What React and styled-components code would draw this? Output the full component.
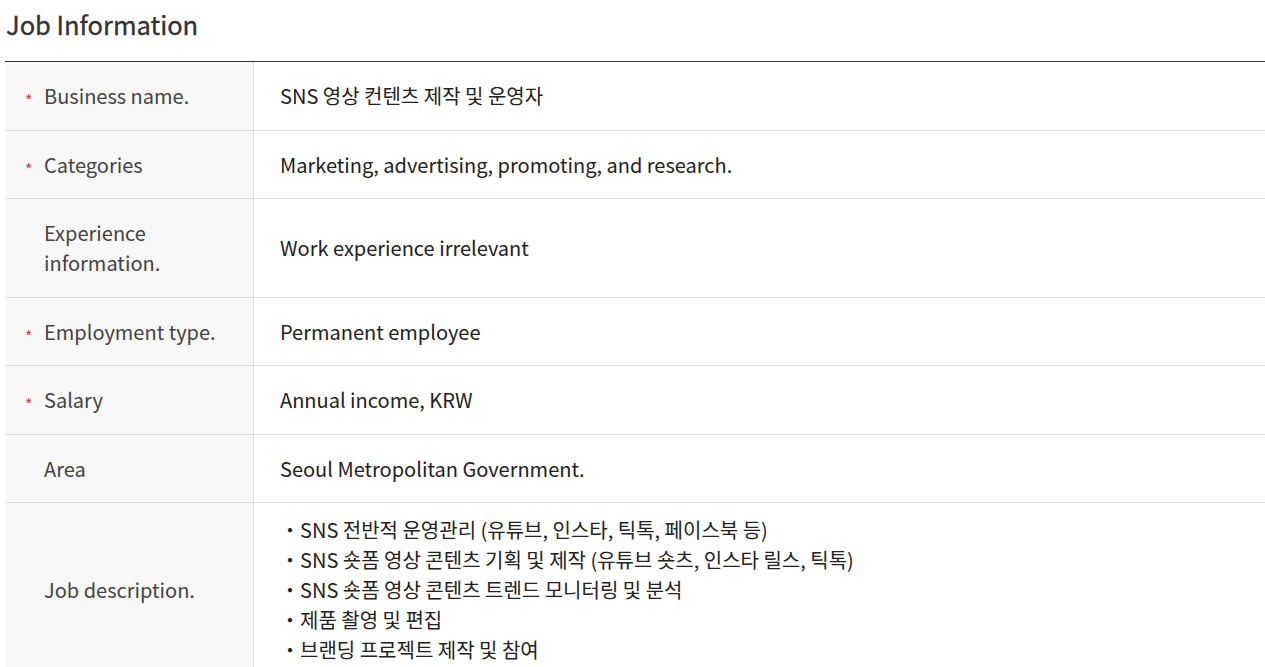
import React from "react";
import styled, { createGlobalStyle } from "styled-components";

const Global = createGlobalStyle`
  body {
    margin: 0;
    background: #fff;
    font-family: "Noto Sans CJK KR", "Noto Sans", sans-serif;
  }
`;

const Section = styled.section`
  padding: 0 0 0 5px;
`;

const Title = styled.h2`
  margin: 0;
  padding: 6px 0 0 1px;
  height: 61px;
  box-sizing: border-box;
  font-size: 25.5px;
  font-weight: 400;
  -webkit-text-stroke: 0.35px #333;
  color: #333;
  line-height: 36px;
`;

const Table = styled.div`
  border-top: 1px solid #333;
  display: grid;
  grid-template-columns: 249px 1fr;
`;

const Label = styled.div`
  background: #f7f7f7;
  border-bottom: 1px solid #ddd;
  border-right: 1px solid #ddd;
  display: flex;
  align-items: center;
  padding: 19px 20px 18.5px;
  font-size: 20px;
  line-height: 30px;
  color: #444;
`;

const Star = styled.span`
  width: 19px;
  flex: none;
  color: #f0304d;
  font-size: 16px;
  line-height: 16px;
  padding-top: 8px;
  visibility: ${(p) => (p.$show ? "visible" : "hidden")};
`;

const Value = styled.div`
  border-bottom: 1px solid #ddd;
  display: flex;
  align-items: center;
  padding: ${(p) => (p.$list ? "12px 26px" : "19px 26px 18.5px")};
  font-size: 20px;
  line-height: 30px;
  color: #222;
`;

const List = styled.ul`
  margin: 0;
  padding: 0;
  list-style: none;
`;

const Item = styled.li`
  display: flex;
  &::before {
    content: "・";
    width: 20px;
    flex: none;
  }
`;

const rows = [
  { label: "Business name.", required: true, value: "SNS 영상 컨텐츠 제작 및 운영자" },
  { label: "Categories", required: true, value: "Marketing, advertising, promoting, and research." },
  { label: <>Experience<br />information.</>, required: false, value: "Work experience irrelevant" },
  { label: "Employment type.", required: true, value: "Permanent employee" },
  { label: "Salary", required: true, value: "Annual income, KRW" },
  { label: "Area", required: false, value: "Seoul Metropolitan Government." },
];

const duties = [
  "SNS 전반적 운영관리 (유튜브, 인스타, 틱톡, 페이스북 등)",
  "SNS 숏폼 영상 콘텐츠 기획 및 제작 (유튜브 숏츠, 인스타 릴스, 틱톡)",
  "SNS 숏폼 영상 콘텐츠 트렌드 모니터링 및 분석",
  "제품 촬영 및 편집",
  "브랜딩 프로젝트 제작 및 참여",
];

const App = () => {
  return (
    <React.Fragment>
      <Global />
      <Section>
        <Title>Job Information</Title>
        <Table>
          {rows.map((r, i) => (
            <React.Fragment key={i}>
              <Label>
                <Star $show={r.required}>*</Star>
                <span>{r.label}</span>
              </Label>
              <Value>{r.value}</Value>
            </React.Fragment>
          ))}
          <Label>
            <Star>*</Star>
            <span>Job description.</span>
          </Label>
          <Value $list>
            <List>
              {duties.map((d) => (
                <Item key={d}>{d}</Item>
              ))}
            </List>
          </Value>
        </Table>
      </Section>
    </React.Fragment>
  );
};

export default App;
